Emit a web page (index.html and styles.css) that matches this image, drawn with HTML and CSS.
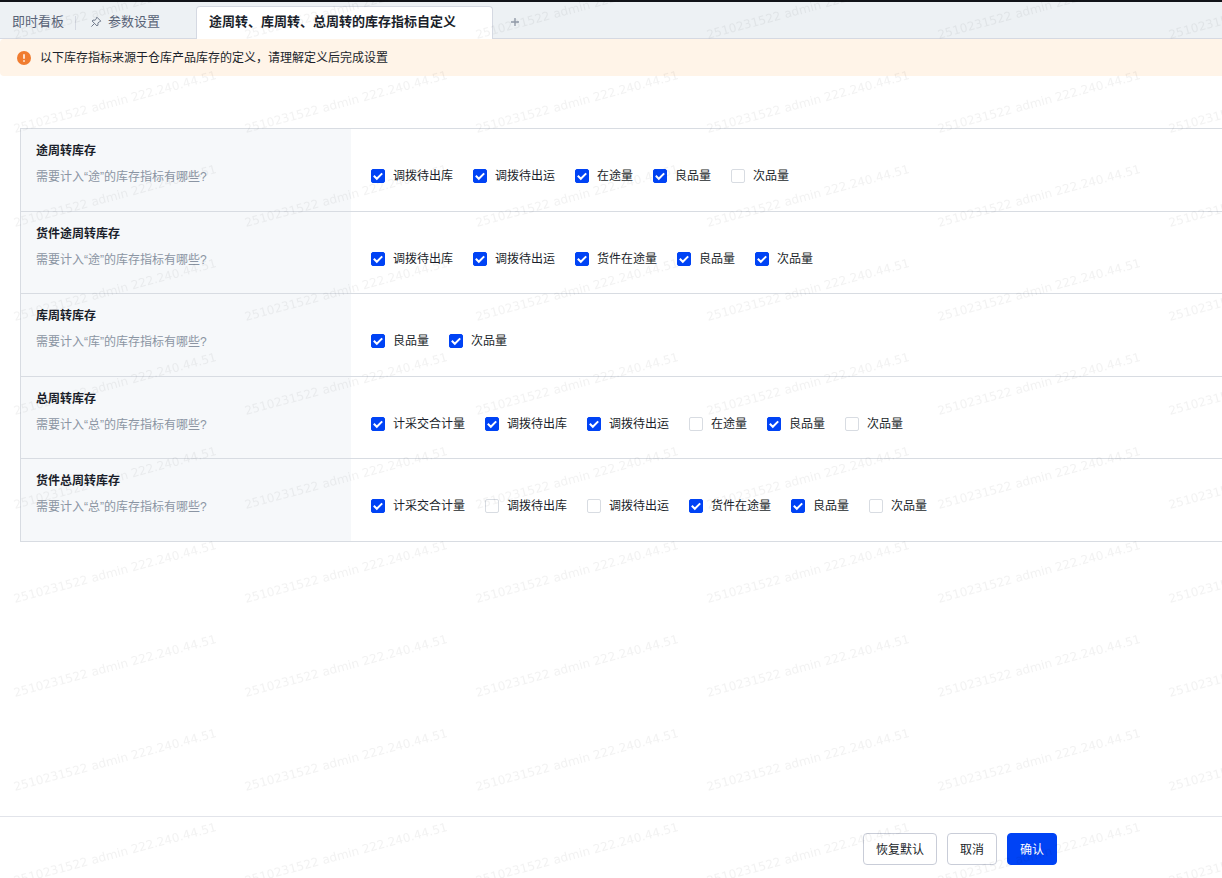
FILE: index.html
```html
<!DOCTYPE html>
<html lang="zh-CN">
<head>
    <meta charset="UTF-8">
    <meta name="viewport" content="width=device-width, initial-scale=1.0">
    <title>途周转、库周转、总周转的库存指标自定义</title>
    <link rel="stylesheet" href="styles.css">
</head>
<body>
    <nav class="tabs">
        <a href="#" class="tab tab-board">即时看板</a>
        <a href="#" class="tab tab-params">
            <svg class="pin" viewBox="0 0 12 12" width="12" height="12">
                <path d="M6.9 1.2l3.9 3.9-1 .7-.6-.1-1.3 1.4.1 2-.9.9-5-5 .9-.9 2 .1 1.4-1.3-.1-.7zM4.4 7.6L1.4 10.6"/>
            </svg>
            参数设置
        </a>
        <a href="#" class="tab active">途周转、库周转、总周转的库存指标自定义</a>
        <button type="button" class="add-tab" aria-label="新建标签">
            <svg viewBox="0 0 8 8" width="8" height="8"><path d="M4 0v8M0 4h8"/></svg>
        </button>
    </nav>

    <div class="notice">
        <svg class="notice-icon" viewBox="0 0 14 14" width="14" height="14">
            <circle cx="7" cy="7" r="7" fill="#f07c30"/>
            <path d="M7 3.2v4.6M7 9.2v1.5" stroke="#fff" stroke-width="1.5"/>
        </svg>
        <p>以下库存指标来源于仓库产品库存的定义，请理解定义后完成设置</p>
    </div>

    <main class="content">
        <table class="settings">
            <tr>
                <th scope="row">
                    <p class="name">途周转库存</p>
                    <p class="desc">需要计入“途”的库存指标有哪些?</p>
                </th>
                <td>
                    <div class="options">
                        <label><input type="checkbox" checked>调拨待出库</label>
                        <label><input type="checkbox" checked>调拨待出运</label>
                        <label><input type="checkbox" checked>在途量</label>
                        <label><input type="checkbox" checked>良品量</label>
                        <label><input type="checkbox">次品量</label>
                    </div>
                </td>
            </tr>
            <tr>
                <th scope="row">
                    <p class="name">货件途周转库存</p>
                    <p class="desc">需要计入“途”的库存指标有哪些?</p>
                </th>
                <td>
                    <div class="options">
                        <label><input type="checkbox" checked>调拨待出库</label>
                        <label><input type="checkbox" checked>调拨待出运</label>
                        <label><input type="checkbox" checked>货件在途量</label>
                        <label><input type="checkbox" checked>良品量</label>
                        <label><input type="checkbox" checked>次品量</label>
                    </div>
                </td>
            </tr>
            <tr>
                <th scope="row">
                    <p class="name">库周转库存</p>
                    <p class="desc">需要计入“库”的库存指标有哪些?</p>
                </th>
                <td>
                    <div class="options">
                        <label><input type="checkbox" checked>良品量</label>
                        <label><input type="checkbox" checked>次品量</label>
                    </div>
                </td>
            </tr>
            <tr>
                <th scope="row">
                    <p class="name">总周转库存</p>
                    <p class="desc">需要计入“总”的库存指标有哪些?</p>
                </th>
                <td>
                    <div class="options">
                        <label><input type="checkbox" checked>计采交合计量</label>
                        <label><input type="checkbox" checked>调拨待出库</label>
                        <label><input type="checkbox" checked>调拨待出运</label>
                        <label><input type="checkbox">在途量</label>
                        <label><input type="checkbox" checked>良品量</label>
                        <label><input type="checkbox">次品量</label>
                    </div>
                </td>
            </tr>
            <tr>
                <th scope="row">
                    <p class="name">货件总周转库存</p>
                    <p class="desc">需要计入“总”的库存指标有哪些?</p>
                </th>
                <td>
                    <div class="options">
                        <label><input type="checkbox" checked>计采交合计量</label>
                        <label><input type="checkbox">调拨待出库</label>
                        <label><input type="checkbox">调拨待出运</label>
                        <label><input type="checkbox" checked>货件在途量</label>
                        <label><input type="checkbox" checked>良品量</label>
                        <label><input type="checkbox">次品量</label>
                    </div>
                </td>
            </tr>
        </table>
    </main>

    <footer class="footer">
        <button type="button" class="btn">恢复默认</button>
        <button type="button" class="btn">取消</button>
        <button type="button" class="btn primary">确认</button>
    </footer>

    <!-- user watermark, repeated over the whole page -->
    <svg class="watermark" aria-hidden="true">
        <defs>
            <pattern id="mark" y="-38" width="231" height="94" patternUnits="userSpaceOnUse">
                <text x="15" y="77" transform="rotate(-15 15 77)">2510231522 admin 222.240.44.51</text>
            </pattern>
        </defs>
        <rect width="100%" height="100%" fill="url(#mark)"/>
    </svg>
</body>
</html>
```
FILE: styles.css
```css
* {
    margin: 0;
    padding: 0;
    box-sizing: border-box;
}

body {
    display: flex;
    flex-direction: column;
    min-height: 100vh;
    overflow-x: hidden;
    border-top: 2px solid #111318;
    background-color: #fff;
    color: #1b1f2b;
    font-family: "Liberation Sans", "Noto Sans CJK SC", sans-serif;
    font-size: 12px;
    line-height: 20px;
}

/* Tabs */
.tabs {
    display: flex;
    height: 37px;
    padding-top: 4px;
    background-color: #edf1f4;
    box-shadow: inset 0 -1px #d5d9e2;
}

.tab {
    display: flex;
    align-items: center;
    padding-bottom: 2px;
    color: #596377;
    font-size: 13px;
    text-decoration: none;
    white-space: nowrap;
}

.tab-board {
    padding-left: 12px;
    padding-right: 11px;
}

.tab-params {
    gap: 6px;
    width: 121px;
    padding-left: 15px;
    background: linear-gradient(#d5d9e2, #d5d9e2) left center / 1px 14px no-repeat;
}

.tab.active {
    padding-left: 12px;
    padding-right: 36px;
    border: 1px solid #d5d9e2;
    border-bottom: none;
    border-radius: 4px 4px 0 0;
    background-color: #fff;
    color: #1b1f2b;
    font-weight: bold;
}

.pin {
    fill: none;
    stroke: #6f798b;
}

.add-tab {
    display: flex;
    align-items: center;
    padding: 0 18px 2px;
    border: none;
    background: none;
    cursor: pointer;
}

.add-tab svg {
    stroke: #8f98a6;
    stroke-width: 1.3;
}

/* Notice bar */
.notice {
    display: flex;
    align-items: center;
    gap: 9px;
    height: 37px;
    padding: 0 17px;
    border-radius: 4px 0 0 4px;
    background-color: #fff4e8;
}

/* Settings table */
.content {
    flex: 1;
    padding: 52px 0 20px 20px;
}

.settings {
    width: 100%;
    height: 414px;
    border-collapse: separate;
    border-spacing: 0;
    border-top: 1px solid #d8dce2;
    border-left: 1px solid #d8dce2;
}

.settings th,
.settings td {
    border-bottom: 1px solid #d8dce2;
    vertical-align: top;
}

.settings th {
    width: 330px;
    padding: 12px 15px;
    background-color: #f6f8fa;
    font-weight: normal;
    text-align: left;
}

.name {
    margin-bottom: 6px;
    font-weight: bold;
}

.desc {
    color: #8b95a3;
}

.settings td {
    padding: 37px 20px 20px;
}

.options {
    display: flex;
    flex-wrap: wrap;
    gap: 20px;
}

.options label {
    display: flex;
    align-items: center;
    gap: 8px;
    cursor: pointer;
}

.options input {
    appearance: none;
    width: 14px;
    height: 14px;
    border: 1px solid #d8dce2;
    border-radius: 2px;
    background-color: #fff;
}

.options input:checked {
    border-color: #0043f5;
    background: #0043f5 url("data:image/svg+xml,%3Csvg xmlns='http://www.w3.org/2000/svg' viewBox='0 0 12 12'%3E%3Cpath d='M1.8 5.8l3 3L10.2 3.4' fill='none' stroke='white' stroke-width='2'/%3E%3C/svg%3E") center / 12px 12px no-repeat;
}

/* Footer */
.footer {
    display: flex;
    justify-content: flex-end;
    gap: 10px;
    height: 62px;
    padding: 16px 165px 0 20px;
    border-top: 1px solid #e2e4ea;
}

.btn {
    height: 32px;
    padding: 0 12px 2px;
    border: 1px solid #c9cdd8;
    border-radius: 4px;
    background-color: #fff;
    color: #1b1f2b;
    font-family: inherit;
    font-size: 12px;
    cursor: pointer;
}

.btn.primary {
    border-color: #0043f5;
    background-color: #0043f5;
    color: #fff;
}

.watermark {
    position: fixed;
    top: 0;
    left: 0;
    width: 100%;
    height: 100%;
    pointer-events: none;
}

.watermark text {
    fill: #000;
    fill-opacity: 0.05;
    font-family: "DejaVu Sans", sans-serif;
    font-size: 12px;
}
```
